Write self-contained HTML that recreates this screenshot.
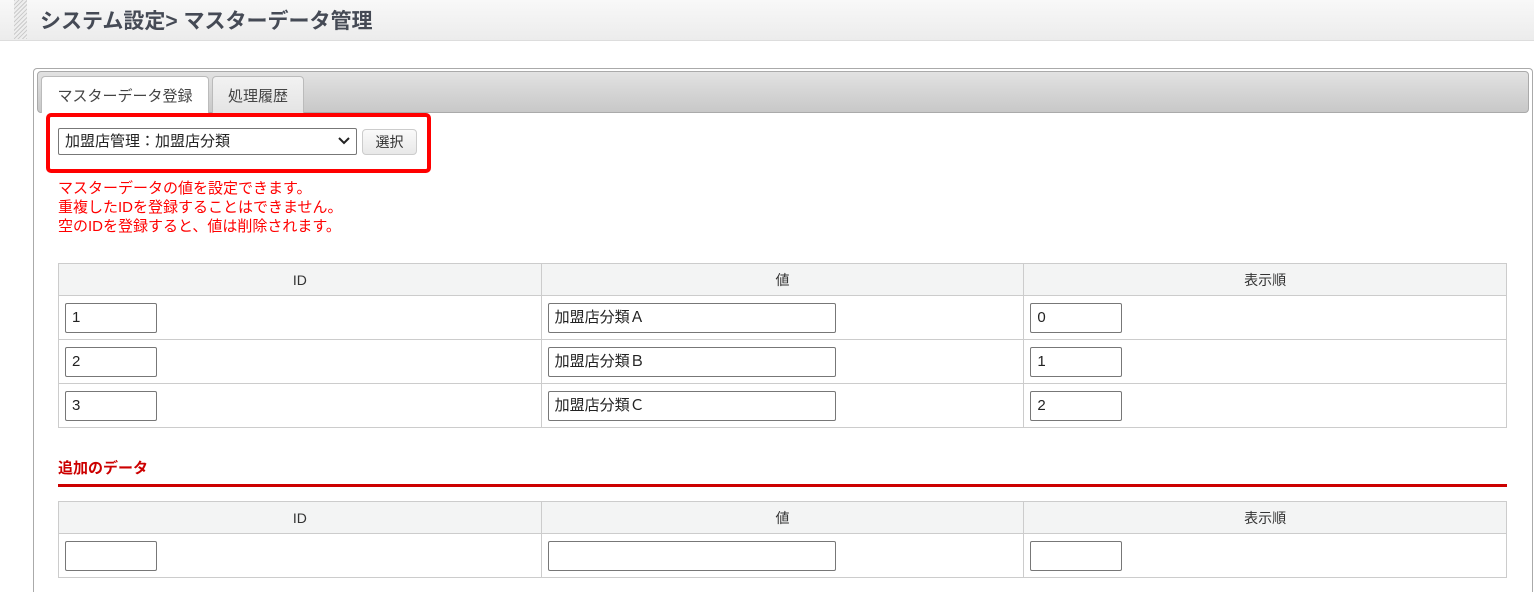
<!DOCTYPE html>
<html><head><meta charset="utf-8"><style>
*{box-sizing:border-box;margin:0;padding:0}
html,body{width:1534px;height:592px;overflow:hidden}
body{background:#fff;font-family:"Liberation Sans","Noto Sans CJK JP",sans-serif;font-size:14px;color:#333;position:relative}
.hdr{position:absolute;left:0;top:0;width:1534px;height:41px;background:linear-gradient(#f8f8f8,#ececec);border-bottom:1px solid #ddd}
.stripe{position:absolute;left:14px;top:0;width:13px;height:39px;background:repeating-linear-gradient(135deg,#ccc 0 1px,#eee 1px 3px)}
.hdr h1{position:absolute;left:40px;top:5px;font-size:21px;font-weight:bold;color:#454a55}
.box{position:absolute;left:33px;top:68px;width:1500px;height:524px;border:1px solid #aaa;border-bottom:none;border-radius:4px 4px 0 0}
.tabbar{position:absolute;left:37px;top:71px;width:1492px;height:42px;border:1px solid #aaa;border-radius:4px;background:linear-gradient(#e2e2e2,#c8c8c8)}
.tab{position:absolute;top:76px;height:37px;border:1px solid #bbb;border-bottom:none;border-radius:4px 4px 0 0;font-size:15px;color:#444;padding-top:8px;text-align:center}
.red{position:absolute;left:46px;top:113px;width:385px;height:60px;border:4px solid #f00;border-radius:5px}
.sel{position:absolute;left:58px;top:128px;width:299px;height:27px;border:1px solid #777;border-radius:2px;font-size:15px;line-height:25px;padding:0 6px;color:#222}
.btn{position:absolute;left:362px;top:129px;width:55px;height:26px;border:1px solid #ccc;border-radius:4px;background:linear-gradient(#fafafa,#e8e8e8);font-size:14px;text-align:center;line-height:24px;color:#333}
.msg{position:absolute;left:58px;top:179px;color:#f00;font-size:15px;line-height:19px}
table{position:absolute;left:58px;width:1449px;border-collapse:collapse;table-layout:fixed}
td,th{border:1px solid #ccc;font-weight:normal;font-size:14px}
th{background:#f3f4f4;height:32px;color:#333}
td{height:44px;padding:0 6px}
.in{width:92px;height:30px;border:1px solid #777;border-radius:2px;padding:0 6px;line-height:28px;font-size:15px;color:#222}
.in.w{width:288px}
.add{position:absolute;left:58px;top:457px;color:#c00;font-weight:bold;font-size:15px}
.line{position:absolute;left:58px;top:484px;width:1449px;height:3px;background:#c00}
</style></head><body>
<div class="hdr"><div class="stripe"></div><h1>システム設定&gt; マスターデータ管理</h1></div>
<div class="box"></div>
<div class="tabbar"></div>
<div class="tab" style="left:41px;width:168px;background:#fff">マスターデータ登録</div>
<div class="tab" style="left:212px;width:92px;background:linear-gradient(#f2f2f2,#e4e4e4)">処理履歴</div>
<div class="red"></div>
<div class="sel">加盟店管理：加盟店分類<svg style="position:absolute;right:6px;top:8px" width="12" height="8" viewBox="0 0 12 8"><path d="M1 1l5 5 5-5" stroke="#222" stroke-width="2" fill="none"/></svg></div>
<div class="btn">選択</div>
<div class="msg">マスターデータの値を設定できます。<br>重複したIDを登録することはできません。<br>空のIDを登録すると、値は削除されます。</div>
<table style="top:263px">
<tr><th>ID</th><th>値</th><th>表示順</th></tr>
<tr><td><div class="in">1</div></td><td><div class="in w">加盟店分類Ａ</div></td><td><div class="in">0</div></td></tr>
<tr><td><div class="in">2</div></td><td><div class="in w">加盟店分類Ｂ</div></td><td><div class="in">1</div></td></tr>
<tr><td><div class="in">3</div></td><td><div class="in w">加盟店分類Ｃ</div></td><td><div class="in">2</div></td></tr>
</table>
<div class="add">追加のデータ</div>
<div class="line"></div>
<table style="top:501px">
<tr><th>ID</th><th>値</th><th>表示順</th></tr>
<tr><td><div class="in"></div></td><td><div class="in w"></div></td><td><div class="in"></div></td></tr>
</table>
</body></html>
